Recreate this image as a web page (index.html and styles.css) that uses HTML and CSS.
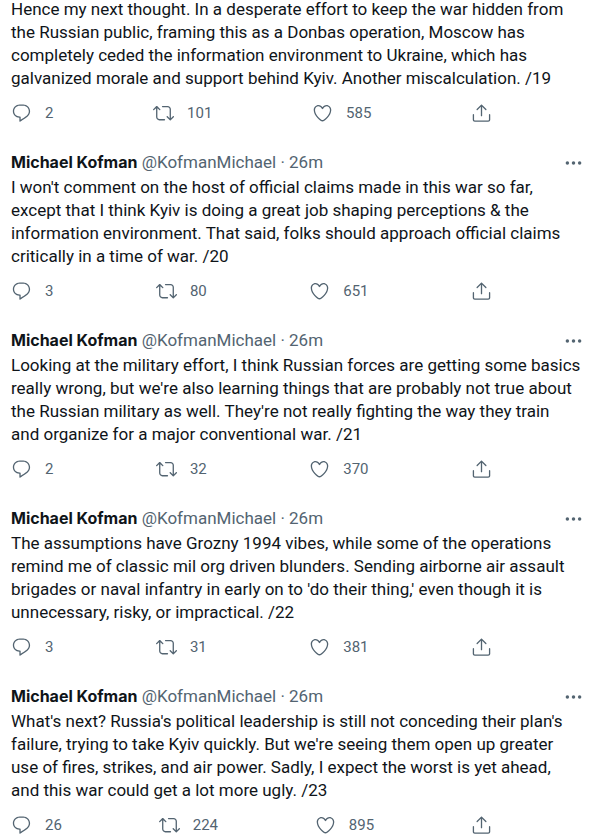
FILE: index.html
```html
<!DOCTYPE html>
<html lang="en">
<head>
    <meta charset="UTF-8">
    <meta name="viewport" content="width=device-width, initial-scale=1.0">
    <title>Michael Kofman - Thread</title>
    <link rel="stylesheet" href="styles.css">
</head>
<body>
    <!-- Shared icons -->
    <svg class="sprite" aria-hidden="true">
        <symbol id="icon-reply" viewBox="0 0 24 24">
            <path d="M14.046 2.242l-4.148-.01h-.002c-4.374 0-7.8 3.427-7.8 7.802 0 4.098 3.186 7.206 7.465 7.37v3.828c0 .108.044.286.12.403.142.225.384.347.632.347.138 0 .277-.038.402-.118.264-.168 6.473-4.14 8.088-5.506 1.902-1.61 3.04-3.97 3.043-6.312v-.017c-.006-4.367-3.43-7.787-7.8-7.788zm3.787 12.972c-1.134.96-4.862 3.405-6.772 4.643V16.67c0-.414-.335-.75-.75-.75h-.396c-3.66 0-6.318-2.476-6.318-5.886 0-3.534 2.768-6.302 6.3-6.302l4.147.01h.002c3.532 0 6.3 2.766 6.302 6.296-.003 1.91-.942 3.844-2.514 5.176z"/>
        </symbol>
        <symbol id="icon-retweet" viewBox="0 0 24 24">
            <path d="M23.77 15.67c-.292-.293-.767-.293-1.06 0l-2.22 2.22V7.65c0-2.068-1.683-3.75-3.75-3.75h-5.85c-.414 0-.75.336-.75.75s.336.75.75.75h5.85c1.24 0 2.25 1.01 2.25 2.25v10.24l-2.22-2.22c-.293-.293-.768-.293-1.06 0s-.294.768 0 1.06l3.5 3.5c.145.147.337.22.53.22s.383-.072.53-.22l3.5-3.5c.294-.292.294-.767 0-1.06zm-10.66 3.28H7.26c-1.24 0-2.25-1.01-2.25-2.25V6.46l2.22 2.22c.148.147.34.22.532.22s.384-.073.53-.22c.293-.293.293-.768 0-1.06l-3.5-3.5c-.293-.294-.768-.294-1.06 0l-3.5 3.5c-.294.292-.294.767 0 1.06s.767.293 1.06 0l2.22-2.22V16.7c0 2.068 1.683 3.75 3.75 3.75h5.85c.414 0 .75-.336.75-.75s-.337-.75-.75-.75z"/>
        </symbol>
        <symbol id="icon-like" viewBox="0 0 24 24">
            <path d="M12 21.638h-.014C9.403 21.59 1.95 14.856 1.95 8.478c0-3.064 2.525-5.754 5.403-5.754 2.29 0 3.83 1.58 4.646 2.73.814-1.148 2.354-2.73 4.645-2.73 2.88 0 5.404 2.69 5.404 5.755 0 6.376-7.454 13.11-10.037 13.157H12zM7.354 4.225c-2.08 0-3.903 1.988-3.903 4.255 0 5.74 7.034 11.596 8.55 11.658 1.518-.062 8.55-5.917 8.55-11.658 0-2.267-1.823-4.255-3.903-4.255-2.528 0-3.94 2.936-3.952 2.965-.23.562-1.156.562-1.387 0-.014-.03-1.425-2.965-3.954-2.965z"/>
        </symbol>
        <symbol id="icon-share" viewBox="0 0 24 24">
            <path d="M17.53 7.47l-5-5c-.293-.293-.768-.293-1.06 0l-5 5c-.294.293-.294.768 0 1.06s.767.294 1.06 0l3.72-3.72V15c0 .414.336.75.75.75s.75-.336.75-.75V4.81l3.72 3.72c.146.147.338.22.53.22s.384-.072.53-.22c.293-.293.293-.767 0-1.06z"/>
            <path d="M19.708 21.944H4.292C3.028 21.944 2 20.916 2 19.652V14c0-.414.336-.75.75-.75s.75.336.75.75v5.652c0 .437.355.792.792.792h15.416c.437 0 .792-.355.792-.792V14c0-.414.336-.75.75-.75s.75.336.75.75v5.652c0 1.264-1.028 2.292-2.292 2.292z"/>
        </symbol>
        <symbol id="icon-more" viewBox="0 0 24 24">
            <circle cx="5" cy="12" r="2"/>
            <circle cx="12" cy="12" r="2"/>
            <circle cx="19" cy="12" r="2"/>
        </symbol>
    </svg>

    <main class="thread">
        <article class="tweet">
            <p class="tweet-text">Hence my next thought. In a desperate effort to keep the war hidden from<br>
                the Russian public, framing this as a Donbas operation, Moscow has<br>
                completely ceded the information environment to Ukraine, which has<br>
                galvanized morale and support behind Kyiv. Another miscalculation. /19</p>
            <div class="actions">
                <button class="action" aria-label="Reply"><svg class="icon"><use href="#icon-reply"/></svg><span>2</span></button>
                <button class="action" aria-label="Retweet"><svg class="icon"><use href="#icon-retweet"/></svg><span>101</span></button>
                <button class="action" aria-label="Like"><svg class="icon"><use href="#icon-like"/></svg><span>585</span></button>
                <button class="action" aria-label="Share"><svg class="icon"><use href="#icon-share"/></svg></button>
            </div>
        </article>

        <article class="tweet">
            <header class="tweet-header">
                <div class="author"><a class="name" href="#">Michael Kofman</a> <a class="handle" href="#">@KofmanMichael</a> · <time>26m</time></div>
                <button class="more" aria-label="More"><svg class="icon"><use href="#icon-more"/></svg></button>
            </header>
            <p class="tweet-text">I won't comment on the host of official claims made in this war so far,<br>
                except that I think Kyiv is doing a great job shaping perceptions &amp; the<br>
                information environment. That said, folks should approach official claims<br>
                critically in a time of war. /20</p>
            <div class="actions">
                <button class="action" aria-label="Reply"><svg class="icon"><use href="#icon-reply"/></svg><span>3</span></button>
                <button class="action" aria-label="Retweet"><svg class="icon"><use href="#icon-retweet"/></svg><span>80</span></button>
                <button class="action" aria-label="Like"><svg class="icon"><use href="#icon-like"/></svg><span>651</span></button>
                <button class="action" aria-label="Share"><svg class="icon"><use href="#icon-share"/></svg></button>
            </div>
        </article>

        <article class="tweet">
            <header class="tweet-header">
                <div class="author"><a class="name" href="#">Michael Kofman</a> <a class="handle" href="#">@KofmanMichael</a> · <time>26m</time></div>
                <button class="more" aria-label="More"><svg class="icon"><use href="#icon-more"/></svg></button>
            </header>
            <p class="tweet-text">Looking at the military effort, I think Russian forces are getting some basics<br>
                really wrong, but we're also learning things that are probably not true about<br>
                the Russian military as well. They're not really fighting the way they train<br>
                and organize for a major conventional war. /21</p>
            <div class="actions">
                <button class="action" aria-label="Reply"><svg class="icon"><use href="#icon-reply"/></svg><span>2</span></button>
                <button class="action" aria-label="Retweet"><svg class="icon"><use href="#icon-retweet"/></svg><span>32</span></button>
                <button class="action" aria-label="Like"><svg class="icon"><use href="#icon-like"/></svg><span>370</span></button>
                <button class="action" aria-label="Share"><svg class="icon"><use href="#icon-share"/></svg></button>
            </div>
        </article>

        <article class="tweet">
            <header class="tweet-header">
                <div class="author"><a class="name" href="#">Michael Kofman</a> <a class="handle" href="#">@KofmanMichael</a> · <time>26m</time></div>
                <button class="more" aria-label="More"><svg class="icon"><use href="#icon-more"/></svg></button>
            </header>
            <p class="tweet-text">The assumptions have Grozny 1994 vibes, while some of the operations<br>
                remind me of classic mil org driven blunders. Sending airborne air assault<br>
                brigades or naval infantry in early on to 'do their thing,' even though it is<br>
                unnecessary, risky, or impractical. /22</p>
            <div class="actions">
                <button class="action" aria-label="Reply"><svg class="icon"><use href="#icon-reply"/></svg><span>3</span></button>
                <button class="action" aria-label="Retweet"><svg class="icon"><use href="#icon-retweet"/></svg><span>31</span></button>
                <button class="action" aria-label="Like"><svg class="icon"><use href="#icon-like"/></svg><span>381</span></button>
                <button class="action" aria-label="Share"><svg class="icon"><use href="#icon-share"/></svg></button>
            </div>
        </article>

        <article class="tweet">
            <header class="tweet-header">
                <div class="author"><a class="name" href="#">Michael Kofman</a> <a class="handle" href="#">@KofmanMichael</a> · <time>26m</time></div>
                <button class="more" aria-label="More"><svg class="icon"><use href="#icon-more"/></svg></button>
            </header>
            <p class="tweet-text">What's next? Russia's political leadership is still not conceding their plan's<br>
                failure, trying to take Kyiv quickly. But we're seeing them open up greater<br>
                use of fires, strikes, and air power. Sadly, I expect the worst is yet ahead,<br>
                and this war could get a lot more ugly. /23</p>
            <div class="actions">
                <button class="action" aria-label="Reply"><svg class="icon"><use href="#icon-reply"/></svg><span>26</span></button>
                <button class="action" aria-label="Retweet"><svg class="icon"><use href="#icon-retweet"/></svg><span>224</span></button>
                <button class="action" aria-label="Like"><svg class="icon"><use href="#icon-like"/></svg><span>895</span></button>
                <button class="action" aria-label="Share"><svg class="icon"><use href="#icon-share"/></svg></button>
            </div>
        </article>
    </main>
</body>
</html>
```
FILE: styles.css
```css
body {
    margin: 0;
    background: #fff;
    color: #0f1419;
    font-family: Roboto, "Liberation Sans", Arial, sans-serif;
    font-size: 17px;
    line-height: 23px;
}

.sprite {
    display: none;
}

.thread {
    display: flex;
    flex-direction: column;
    gap: 27px;
    margin-top: -2px;
    padding: 0 14px 0 11px;
}

.tweet-header {
    display: flex;
    justify-content: space-between;
    align-items: center;
    margin-bottom: 2px;
    color: #536471;
}

.name {
    color: #0f1419;
    font-family: Inter, Roboto, sans-serif;
    font-size: 16px;
    font-weight: bold;
    text-decoration: none;
}

.handle {
    color: #536471;
    text-decoration: none;
}

.tweet-text {
    margin: 0 0 12px;
    white-space: nowrap;
}

.actions {
    display: flex;
    justify-content: space-between;
    max-width: 481px;
}

.action,
.more {
    display: flex;
    align-items: center;
    gap: 13px;
    padding: 0;
    border: none;
    background: none;
    color: #536471;
    font-family: inherit;
    font-size: 15px;
    line-height: 22px;
    cursor: pointer;
}

.icon {
    width: 21px;
    height: 22px;
    fill: currentColor;
}
```
